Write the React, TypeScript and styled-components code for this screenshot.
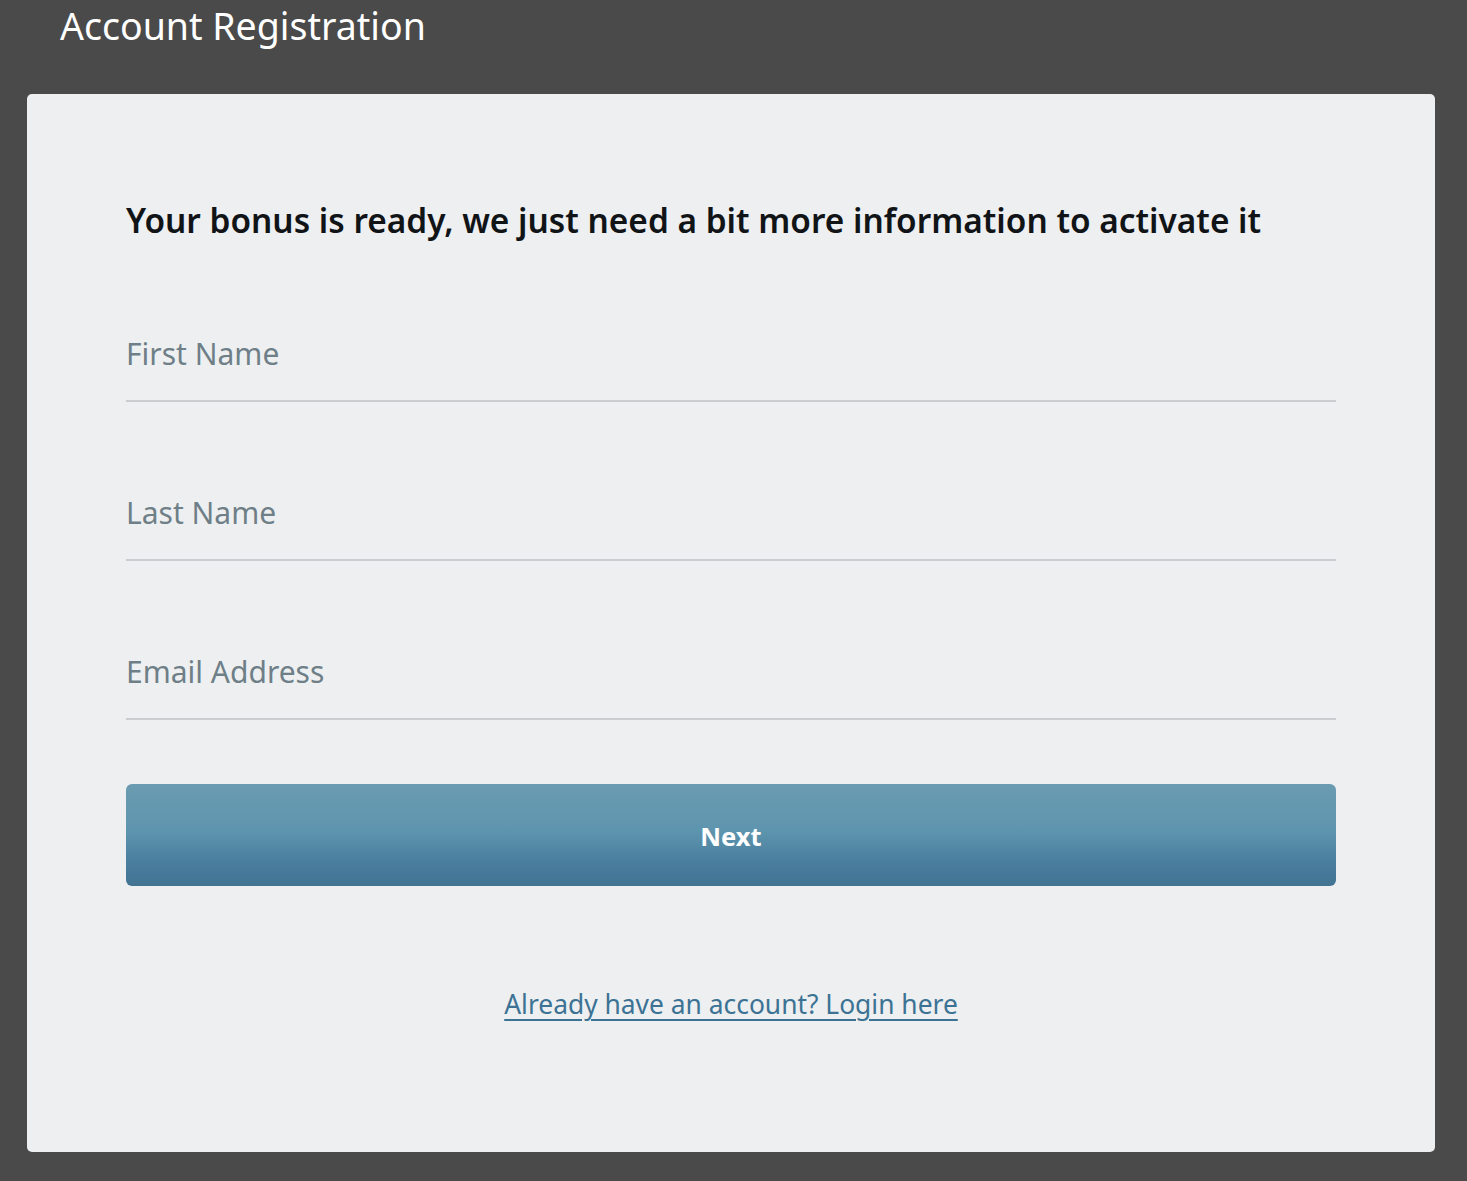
import styled, { createGlobalStyle } from "styled-components";

const GlobalStyle = createGlobalStyle`
    html, body {
        margin: 0;
        padding: 0;
        background-color: #4a4a4a;
        font-family: "Noto Sans", "Open Sans", sans-serif;
    }
`

const Page = styled.div`
    min-height: 1181px;
    padding: 0 32px 28px 27px;
    box-sizing: border-box;
    width: 1467px;
`

const PageTitle = styled.h1`
    margin: 0;
    padding: 0 0 0 33px;
    height: 94px;
    line-height: 52px;
    font-size: 37.5px;
    font-weight: 400;
    color: #ffffff;
`

const Card = styled.div`
    background-color: #eeeff0;
    border-radius: 5px;
    padding: 98px 99px 0;
    height: 1058px;
    box-sizing: border-box;
`

const Lead = styled.h2`
    margin: 0 0 40px;
    font-size: 33.4px;
    line-height: 56px;
    font-weight: 600;
    color: #111417;
`

const Field = styled.div`
    height: 159px;
    display: flex;
    align-items: flex-end;
    &:first-of-type {
        height: 114px;
    }
`

const Input = styled.input`
    width: 100%;
    border: 0;
    border-bottom: 2px solid #c9cdcf;
    background: transparent;
    padding: 0 0 26px;
    font-family: inherit;
    font-size: 30px;
    color: #2b3236;
    outline: none;
    &::placeholder {
        color: #6e7f88;
    }
`

const NextButton = styled.button`
    display: block;
    width: 100%;
    height: 102px;
    margin-top: 64px;
    padding: 2px 0 0;
    border: 0;
    border-radius: 6px;
    background: linear-gradient(to bottom, #6a9bb1 0%, #5e95ae 45%, #4a7f9f 75%, #427393 100%);
    color: #ffffff;
    font-family: inherit;
    font-size: 25.5px;
    font-weight: 700;
    cursor: pointer;
`

const Footer = styled.div`
    margin-top: 100px;
    text-align: center;
`

const LoginLink = styled.a`
    font-size: 26.4px;
    color: #3c7395;
    text-decoration: underline;
    text-underline-offset: 5px;
    text-decoration-thickness: 2px;
`

const App = () => {
    return <>
        <GlobalStyle />
        <Page>
            <PageTitle>Account Registration</PageTitle>
            <Card>
                <Lead>Your bonus is ready, we just need a bit more information to activate it</Lead>
                <Field><Input placeholder="First Name" /></Field>
                <Field><Input placeholder="Last Name" /></Field>
                <Field><Input placeholder="Email Address" /></Field>
                <NextButton>Next</NextButton>
                <Footer>
                    <LoginLink href="#">Already have an account? Login here</LoginLink>
                </Footer>
            </Card>
        </Page>
    </>
}

export default App;
